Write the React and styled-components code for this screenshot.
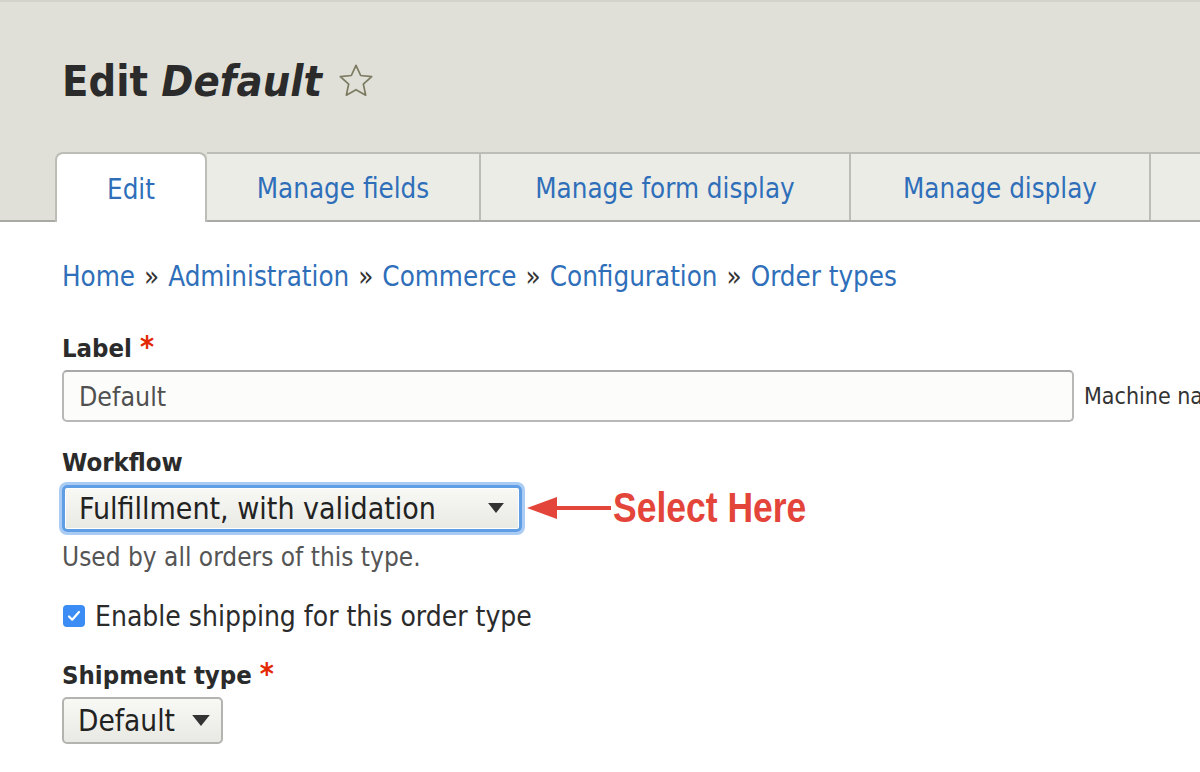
import React from "react";
import styled, {createGlobalStyle} from "styled-components";

const GlobalStyle = createGlobalStyle`
    html, body {
        margin: 0;
        padding: 0;
        background: #fff;
        overflow: hidden;
    }
    body {
        font-family: "DejaVu Sans", "Liberation Sans", sans-serif;
        font-stretch: condensed;
        color: #333;
    }
`;

const TABS = [
    {label: "Edit", width: 152, active: true},
    {label: "Manage fields", width: 274},
    {label: "Manage form display", width: 370},
    {label: "Manage display", width: 300},
    {label: "", width: 120},
];

const CRUMBS = ["Home", "Administration", "Commerce", "Configuration", "Order types"];

function StarIcon() {
    return (
        <svg width="40" height="40" viewBox="0 0 24 24" fill="none" stroke="#7d7b62" strokeWidth="1.05" strokeLinejoin="round">
            <path d="M12 2.6l2.8 6.1 6.6.7-5 4.5 1.4 6.6L12 17.2l-5.8 3.3 1.4-6.6-5-4.5 6.6-.7z" />
        </svg>
    );
}

function Caret({size = 18}) {
    return (
        <svg width={size} height={size * 0.66} viewBox="0 0 18 12">
            <path d="M1 1h16L9 11z" fill="#333" />
        </svg>
    );
}

function RedArrow() {
    return (
        <svg width="88" height="30" viewBox="0 0 88 30">
            <path d="M30 15H86" stroke="#e4453a" strokeWidth="4" />
            <path d="M2 15L32 4v22z" fill="#e4453a" />
        </svg>
    );
}

function App() {
    return (
        <Page>
            <GlobalStyle />
            <Header>
                <Title>
                    Edit <em>Default</em>
                    <StarButton><StarIcon /></StarButton>
                </Title>
                <Tabs>
                    {TABS.map((t, i) => (
                        <Tab key={i} $active={t.active} $width={t.width}>{t.label}</Tab>
                    ))}
                </Tabs>
            </Header>

            <Content>
                <Breadcrumb>
                    {CRUMBS.map((c, i) => (
                        <React.Fragment key={c}>
                            {i > 0 && <Sep>»</Sep>}
                            <Crumb href="#">{c}</Crumb>
                        </React.Fragment>
                    ))}
                </Breadcrumb>

                <Field $gap={40}>
                    <Label>Label <Required>*</Required></Label>
                    <InputRow>
                        <TextInput>Default</TextInput>
                        <MachineName>Machine name: default</MachineName>
                    </InputRow>
                </Field>

                <Field $gap={25}>
                    <Label>Workflow</Label>
                    <InputRow>
                        <Select $focused $width={460}>
                            <span>Fulfillment, with validation</span>
                            <Caret />
                        </Select>
                        <Callout>
                            <RedArrow />
                            <CalloutText>Select Here</CalloutText>
                        </Callout>
                    </InputRow>
                    <Description>Used by all orders of this type.</Description>
                </Field>

                <CheckRow>
                    <CheckBox>
                        <svg width="14" height="12" viewBox="0 0 14 12">
                            <path d="M2 6.5l3.2 3.2L12 2" fill="none" stroke="#fff" strokeWidth="2.2" strokeLinecap="round" strokeLinejoin="round" />
                        </svg>
                    </CheckBox>
                    <CheckLabel>Enable shipping for this order type</CheckLabel>
                </CheckRow>

                <Field $gap={28}>
                    <Label>Shipment type <Required>*</Required></Label>
                    <Select $width={161}>
                        <span>Default</span>
                        <Caret size={20} />
                    </Select>
                </Field>
            </Content>
        </Page>
    );
}

const Page = styled.div`
    width: 1200px;
    height: 772px;
    overflow: hidden;
`;

const Header = styled.header`
    background: #e0e0d8;
    border-top: 2px solid #d3d3cb;
    padding-top: 52px;
`;

const Title = styled.h1`
    margin: 0 0 44px 62px;
    display: flex;
    align-items: center;
    font-size: 43px;
    font-weight: bold;
    line-height: 54px;
    color: #2b2b2b;
    white-space: pre;

    em {
        font-style: italic;
    }
`;

const StarButton = styled.span`
    display: inline-flex;
    margin-left: 14px;
`;

const Tabs = styled.nav`
    display: flex;
    padding-left: 55px;
    border-bottom: 2px solid #a9a9a6;
`;

const Tab = styled.a`
    flex: 0 0 ${p => p.$width}px;
    box-sizing: border-box;
    display: flex;
    align-items: center;
    justify-content: center;
    padding-top: 2px;
    font-size: 27.5px;
    color: #2f6fba;
    background: ${p => p.$active ? "#fff" : "#ecece7"};
    border-top: 2px solid #bdbdb8;
    border-left: ${p => p.$active ? "2px solid #bdbdb8" : "none"};
    border-right: 2px solid #bdbdb8;
    border-radius: ${p => p.$active ? "8px 8px 0 0" : "0"};
    margin-bottom: ${p => p.$active ? "-2px" : "0"};
    height: ${p => p.$active ? "70px" : "68px"};
`;

const Content = styled.main`
    padding: 38px 0 0 62px;
`;

const Breadcrumb = styled.div`
    display: flex;
    align-items: baseline;
    gap: 9px;
    font-size: 27.5px;
    line-height: 32px;
`;

const Crumb = styled.a`
    color: #2f6fba;
    text-decoration: none;
`;

const Sep = styled.span`
    color: #333;
`;

const Field = styled.div`
    margin-top: ${p => p.$gap}px;
`;

const Label = styled.div`
    font-size: 25.5px;
    font-weight: bold;
    line-height: 30px;
    color: #2b2b2b;
    margin-bottom: 7px;
`;

const Required = styled.span`
    color: #e32700;
    font-size: 30px;
`;

const InputRow = styled.div`
    display: flex;
    align-items: center;
`;

const TextInput = styled.div`
    box-sizing: border-box;
    width: 1012px;
    height: 52px;
    padding: 0 15px;
    display: flex;
    align-items: center;
    border: 2px solid #b8b8b6;
    border-top-color: #a8a8a6;
    border-radius: 5px;
    background: #fcfcfa;
    font-size: 26.5px;
    color: #505050;
    flex-shrink: 0;
`;

const MachineName = styled.span`
    margin-left: 10px;
    font-size: 23px;
    color: #333;
    white-space: nowrap;
`;

const Select = styled.div`
    box-sizing: border-box;
    width: ${p => p.$width}px;
    height: 47px;
    display: flex;
    align-items: center;
    justify-content: space-between;
    padding: 0 ${p => p.$focused ? "14px" : "10px"} 0 14px;
    font-size: ${p => p.$focused ? "30px" : "29.5px"};
    color: #222;
    background: linear-gradient(#f8f8f5, #e9e9e4);
    border: ${p => p.$focused ? "3px solid #5f9de5" : "2px solid #b3b3b0"};
    border-radius: 5px;
    box-shadow: ${p => p.$focused ? "0 0 0 3px #aacbf3, inset 0 0 0 1px #fff" : "none"};
    flex-shrink: 0;
`;

const Callout = styled.div`
    display: flex;
    align-items: center;
    margin-left: 3px;
`;

const CalloutText = styled.span`
    display: inline-block;
    font-family: "Liberation Sans", sans-serif;
    font-weight: bold;
    font-size: 42px;
    color: #e4453a;
    margin-left: 0;
    transform: scaleX(0.845);
    transform-origin: left center;
`;

const Description = styled.div`
    margin-top: 10px;
    font-size: 26px;
    line-height: 30px;
    color: #555;
`;

const CheckRow = styled.label`
    display: flex;
    align-items: center;
    gap: 10px;
    margin: 29px 0 0 1px;
    height: 30px;
`;

const CheckBox = styled.span`
    width: 22px;
    height: 22px;
    border-radius: 4px;
    background: #3b8df5;
    display: flex;
    align-items: center;
    justify-content: center;
`;

const CheckLabel = styled.span`
    font-size: 28px;
    color: #2b2b2b;
`;

export default App;
